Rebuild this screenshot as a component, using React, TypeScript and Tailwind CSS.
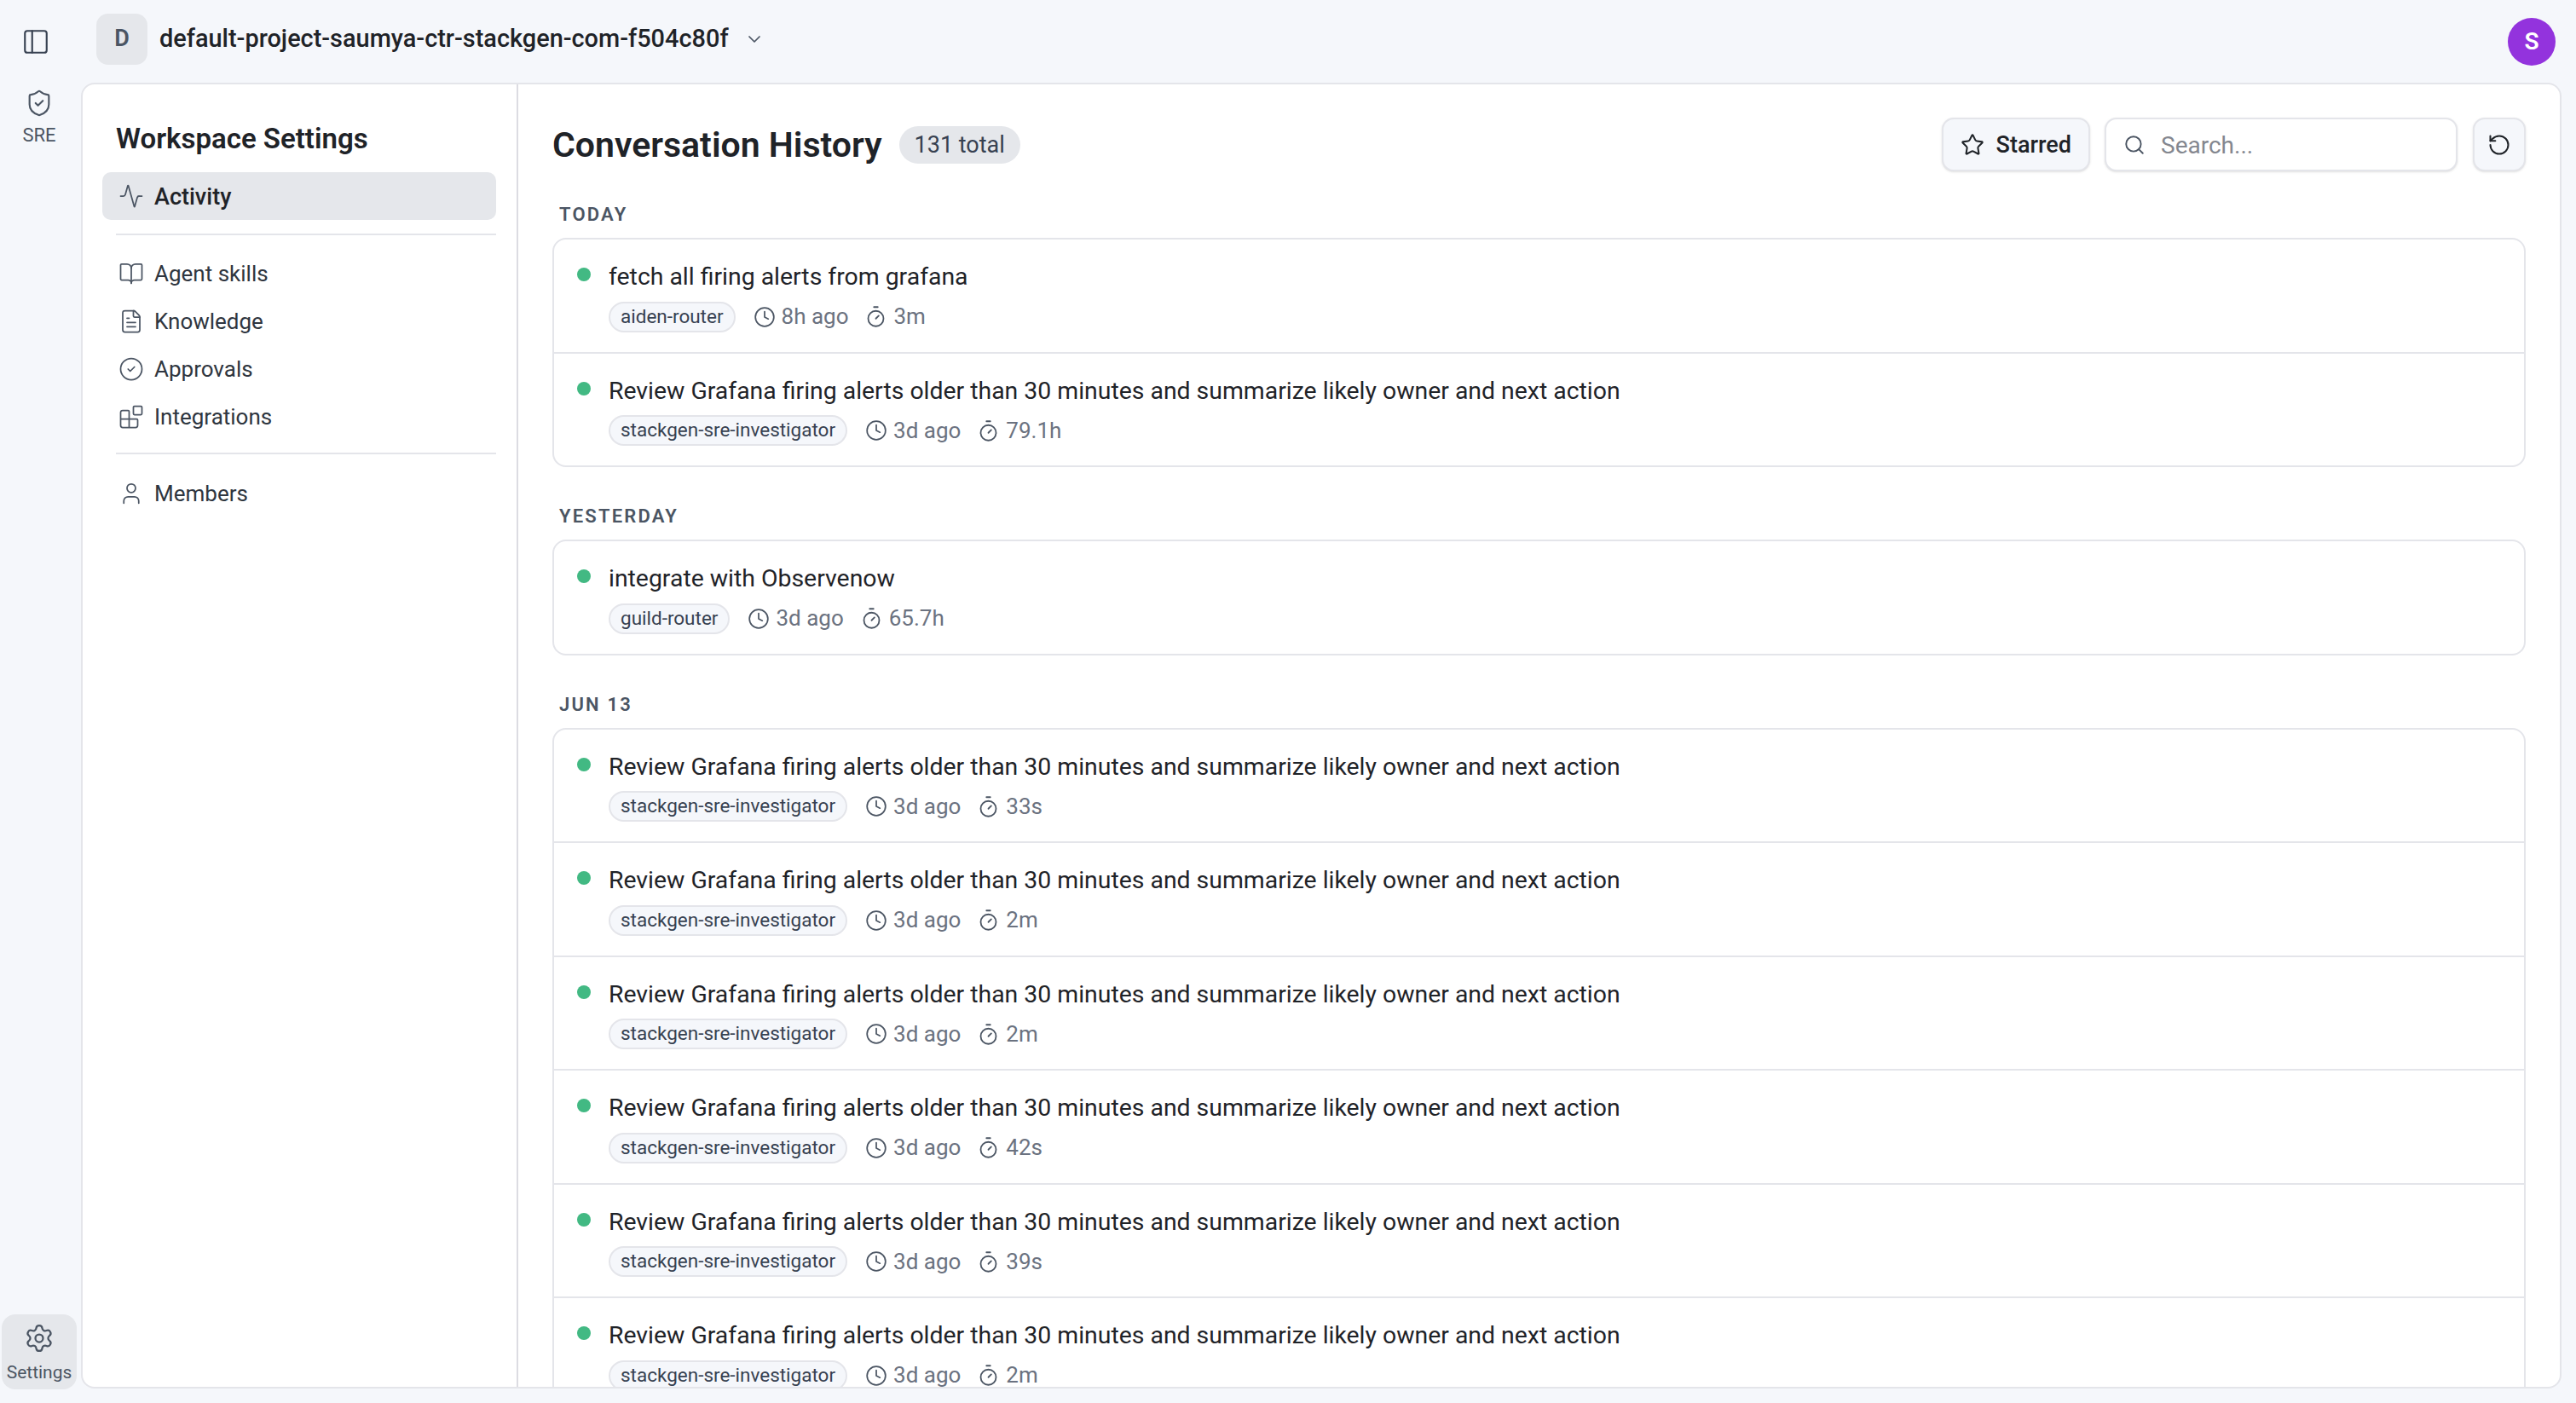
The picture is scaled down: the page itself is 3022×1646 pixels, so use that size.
import {
  Activity,
  BookOpen,
  Blocks,
  ChevronDown,
  CircleCheck,
  Clock,
  FileText,
  PanelLeft,
  RotateCcw,
  Search,
  Settings,
  ShieldCheck,
  Star,
  Timer,
  User,
} from "lucide-react";

const REVIEW = "Review Grafana firing alerts older than 30 minutes and summarize likely owner and next action";
const SRE = "stackgen-sre-investigator";

const groups = [
  {
    label: "TODAY",
    rows: [
      { title: "fetch all firing alerts from grafana", agent: "aiden-router", age: "8h ago", took: "3m" },
      { title: REVIEW, agent: SRE, age: "3d ago", took: "79.1h" },
    ],
  },
  {
    label: "YESTERDAY",
    rows: [{ title: "integrate with Observenow", agent: "guild-router", age: "3d ago", took: "65.7h" }],
  },
  {
    label: "JUN 13",
    rows: [
      { title: REVIEW, agent: SRE, age: "3d ago", took: "33s" },
      { title: REVIEW, agent: SRE, age: "3d ago", took: "2m" },
      { title: REVIEW, agent: SRE, age: "3d ago", took: "2m" },
      { title: REVIEW, agent: SRE, age: "3d ago", took: "42s" },
      { title: REVIEW, agent: SRE, age: "3d ago", took: "39s" },
      { title: REVIEW, agent: SRE, age: "3d ago", took: "2m" },
    ],
  },
];

function NavItem({ icon: Icon, label }: { icon: typeof Activity; label: string }) {
  return (
    <div className="flex h-[56px] items-center gap-[12px] pl-[19px] text-[26px] text-[#2f3640]">
      <Icon size={30} strokeWidth={1.4} className="shrink-0 text-[#4b5563]" />
      <span>{label}</span>
    </div>
  );
}

function Row({ title, agent, age, took }: { title: string; agent: string; age: string; took: string }) {
  return (
    <div className="flex h-[133.5px] shrink-0 gap-[21px] border-b-2 border-[#e4e5ea] pl-[27px] pt-[24px] last:h-[131.5px] last:border-b-0">
      <div className="mt-[9px] h-[16px] w-[16px] shrink-0 rounded-full bg-[#42b983]" />
      <div className="flex flex-col gap-[7px]">
        <div className="h-[40px] text-[28.4px] leading-[40px] text-[#1f2328]">{title}</div>
        <div className="flex items-center text-[26px] text-[#6b7280]">
          <span className="flex h-[36px] items-center rounded-full border-2 border-[#e4e5ea] bg-[#f5f7fb] px-[12px] text-[22.5px] text-[#374151]">
            {agent}
          </span>
          <Clock size={26} strokeWidth={1.6} className="ml-[21px] text-[#4b5563]" />
          <span className="ml-[7px]">{age}</span>
          <Timer size={27} strokeWidth={1.6} className="ml-[19px] text-[#4b5563]" />
          <span className="ml-[7px]">{took}</span>
        </div>
      </div>
    </div>
  );
}

export default function App() {
  return (
    <div className="flex h-[1646px] w-[3022px] flex-col overflow-hidden bg-[#f5f7fb] font-['Roboto',sans-serif] text-[#1f2328]">
      {/* top bar */}
      <header className="flex h-[97px] shrink-0 items-center">
        <PanelLeft size={34} strokeWidth={1.5} className="ml-[25px] text-[#374151]" />
        <div className="mb-[6px] ml-[54px] flex items-center">
          <div className="flex h-[60px] w-[60px] items-center justify-center rounded-[14px] bg-[#e5e7eb] text-[27px] font-semibold text-[#4b5563]">
            D
          </div>
          <span className="ml-[14px] text-[28.9px] font-medium text-[#1f2328]">default-project-saumya-ctr-stackgen-com-f504c80f</span>
          <ChevronDown size={24} strokeWidth={1.75} className="ml-[18px] text-[#4b5563]" />
        </div>
        <div className="ml-auto mr-[24px] flex h-[56px] w-[56px] items-center justify-center rounded-full bg-[#9333dd] text-[28px] font-semibold text-white">
          S
        </div>
      </header>

      <div className="flex min-h-0 flex-1">
        {/* app rail */}
        <nav className="flex w-[95px] shrink-0 flex-col justify-between pb-[16px] pt-[7px]">
          <div className="flex w-[92px] flex-col items-center gap-[4px] text-[22px] text-[#4b5563]">
            <ShieldCheck size={34} strokeWidth={1.5} />
            <span>SRE</span>
          </div>
          <div className="ml-[2px] flex h-[88px] w-[88px] flex-col items-center justify-center gap-[9px] rounded-[16px] bg-[#e5e7eb] pt-[2px] text-[21px] text-[#4b5563]">
            <Settings size={36} strokeWidth={1.5} />
            <span className="leading-[26px]">Settings</span>
          </div>
        </nav>

        {/* panel */}
        <div className="mb-[17px] mr-[17px] flex min-w-0 flex-1 overflow-hidden rounded-[16px] border-2 border-[#e4e5ea] bg-white">
          <aside className="w-[511px] shrink-0 border-r-2 border-[#dcdce2] pl-[23px] pr-[24px] pt-[40px]">
            <h2 className="mb-[15px] h-[48px] pl-[16px] text-[33px] font-semibold leading-[48px] text-[#1f2328]">Workspace Settings</h2>
            <div className="flex h-[56px] items-center gap-[12px] rounded-[10px] bg-[#e5e7eb] pl-[19px] text-[27px] font-medium text-[#1f2328]">
              <Activity size={30} strokeWidth={1.4} className="text-[#4b5563]" />
              <span className="pt-[2px]">Activity</span>
            </div>
            <div className="ml-[16px] mt-[16px] h-[2px] bg-[#e4e5ea]" />
            <div className="mt-[17px]">
              <NavItem icon={BookOpen} label="Agent skills" />
              <NavItem icon={FileText} label="Knowledge" />
              <NavItem icon={CircleCheck} label="Approvals" />
              <NavItem icon={Blocks} label="Integrations" />
            </div>
            <div className="ml-[16px] mt-[14px] h-[2px] bg-[#e4e5ea]" />
            <div className="mt-[18px]">
              <NavItem icon={User} label="Members" />
            </div>
          </aside>

          <main className="min-w-0 flex-1 overflow-hidden pl-[40px] pr-[40px] pt-[39px]">
            <div className="flex h-[63px] items-center">
              <h1 className="pt-[3px] text-[41px] font-semibold text-[#1f2328]">Conversation History</h1>
              <span className="ml-[20px] flex h-[44px] items-center rounded-full bg-[#e5e7eb] px-[18px] pt-[2px] text-[27px] text-[#374151]">131 total</span>
              <button className="ml-auto flex h-[63px] items-center gap-[14px] rounded-[14px] border-2 border-[#e4e5ea] bg-[#f5f7fb] pl-[20px] pr-[20px] text-[27px] font-medium text-[#1f2328] shadow-sm">
                <Star size={28} strokeWidth={1.75} />
                <span className="pt-[2px]">Starred</span>
              </button>
              <div className="ml-[17px] flex h-[63px] w-[414px] items-center gap-[18px] rounded-[14px] border-2 border-[#e4e5ea] bg-white pl-[20px] shadow-sm">
                <Search size={26} strokeWidth={1.75} className="shrink-0 text-[#4b5563]" />
                <input
                  placeholder="Search..."
                  className="w-full bg-transparent pt-[2px] text-[28px] outline-none placeholder:text-[#84878f]"
                />
              </div>
              <button className="ml-[18px] flex h-[63px] w-[62px] items-center justify-center rounded-[14px] border-2 border-[#e4e5ea] bg-[#f5f7fb] text-[#1f2328] shadow-sm">
                <RotateCcw size={28} strokeWidth={1.75} />
              </button>
            </div>

            {groups.map((g, i) => (
              <section key={g.label} className={i === 0 ? "mt-[37px]" : "mt-[44px]"}>
                <div className="h-[28px] pl-[8px] text-[22px] font-semibold leading-[28px] tracking-[0.1em] text-[#4b5563]">{g.label}</div>
                <div className="mt-[13px] flex flex-col rounded-[16px] border-2 border-[#e4e5ea] bg-white">
                  {g.rows.map((r, j) => (
                    <Row key={j} {...r} />
                  ))}
                </div>
              </section>
            ))}
          </main>
        </div>
      </div>
    </div>
  );
}
